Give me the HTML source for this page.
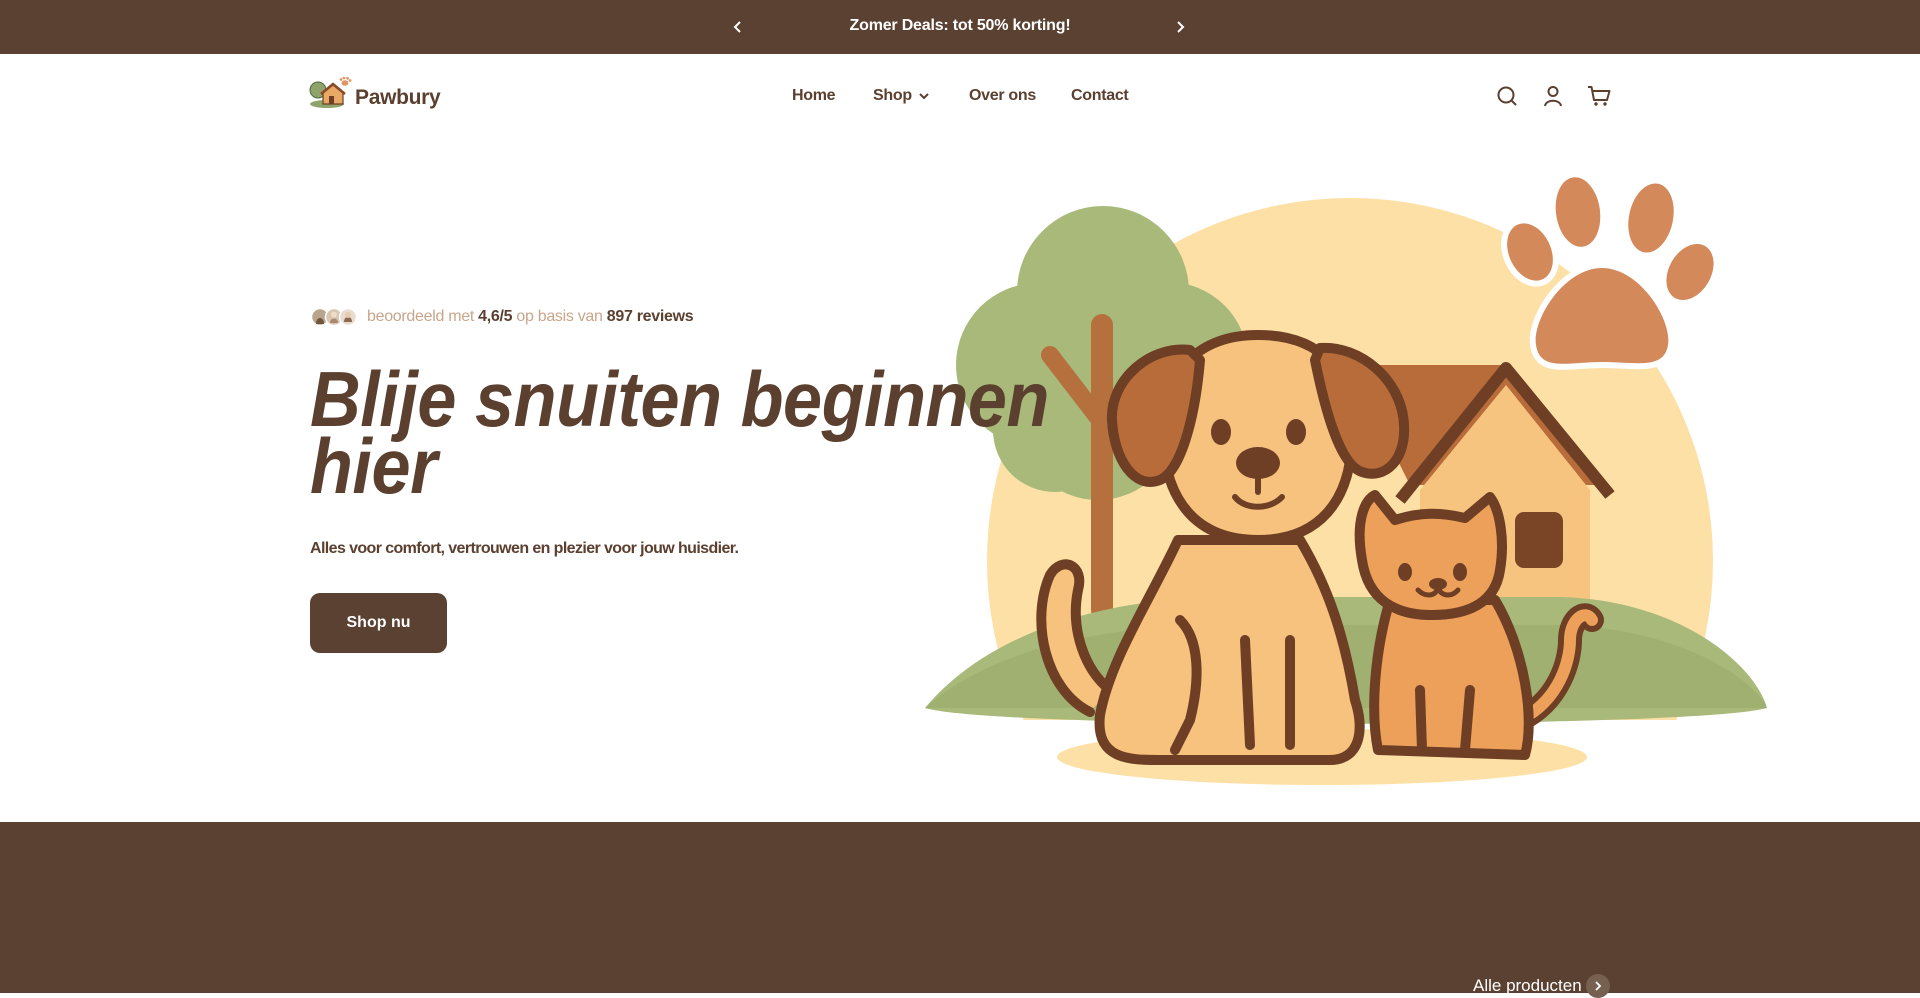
<!DOCTYPE html>
<html><head><meta charset="utf-8"><style>
*{margin:0;padding:0;box-sizing:border-box}
body{width:1920px;height:993px;overflow:hidden;background:#fff;font-family:"Liberation Sans",sans-serif;color:#5b4030;position:relative}
.abs{position:absolute}
.top{left:0;top:0;width:1920px;height:54px;background:#5b4131}
.top .t{left:0;width:1920px;top:17px;text-align:center;color:#fff;font-weight:bold;font-size:16px;letter-spacing:-0.2px}
.nav a{position:absolute;top:87px;font-weight:bold;font-size:16px;color:#5b4030;text-decoration:none;letter-spacing:-0.3px}
h1{position:absolute;z-index:2;left:310px;top:366px;font-size:78px;line-height:67px;font-style:italic;font-weight:bold;white-space:nowrap;transform:scaleX(.9);transform-origin:left top;letter-spacing:-0.5px}
</style></head><body>
<div class="abs top">
  <div class="abs t">Zomer Deals: tot 50% korting!</div>
  <svg class="abs" style="left:732px;top:20px" width="12" height="14" viewBox="0 0 12 14"><path d="M8 2 L3 7 L8 12" stroke="#fff" stroke-width="2" fill="none"/></svg>
  <svg class="abs" style="left:1174px;top:20px" width="12" height="14" viewBox="0 0 12 14"><path d="M4 2 L9 7 L4 12" stroke="#fff" stroke-width="2" fill="none"/></svg>
</div>
<svg class="abs" style="left:309px;top:77px" width="44" height="32" viewBox="0 0 44 32">
  <ellipse cx="18" cy="27" rx="17" ry="4" fill="#8fa46a"/>
  <circle cx="9" cy="13" r="8" fill="#8fa46a" stroke="#4d6b3a" stroke-width="1"/>
  <path d="M14 16 L24 8 L34 16 L34 27 L14 27 Z" fill="#e8a866" stroke="#6e3f25" stroke-width="1.2"/>
  <path d="M12 17 L24 7 L36 17" fill="none" stroke="#8a4a2a" stroke-width="2.5"/>
  <rect x="20" y="19" width="5" height="8" fill="#6e3f25"/>
  <g fill="#e29463"><ellipse cx="36" cy="6" rx="3.4" ry="2.8"/><circle cx="32" cy="2.5" r="1.4"/><circle cx="35" cy="1" r="1.4"/><circle cx="38.5" cy="1.3" r="1.4"/><circle cx="41" cy="3.5" r="1.4"/></g>
</svg>
<div class="abs" style="left:355px;top:86px;font-size:21px;font-weight:bold;color:#5b4030;letter-spacing:-0.3px">Pawbury</div>
<div class="nav">
  <a style="left:792px">Home</a>
  <a style="left:873px">Shop</a>
  <a style="left:969px">Over ons</a>
  <a style="left:1071px">Contact</a>
</div>
<svg class="abs" style="left:918px;top:91px" width="12" height="10" viewBox="0 0 12 10"><path d="M2 3 L6 7 L10 3" stroke="#5b4030" stroke-width="2" fill="none"/></svg>
<svg class="abs" style="left:1496px;top:85px" width="22" height="22" viewBox="0 0 22 22"><circle cx="10" cy="10" r="7.5" stroke="#5b4030" stroke-width="2" fill="none"/><path d="M15.5 15.5 L20 20" stroke="#5b4030" stroke-width="2"/></svg>
<svg class="abs" style="left:1542px;top:85px" width="22" height="22" viewBox="0 0 22 22"><circle cx="11" cy="6.5" r="4.5" stroke="#5b4030" stroke-width="2" fill="none"/><path d="M3 21 C4 14 18 14 19 21" stroke="#5b4030" stroke-width="2" fill="none"/></svg>
<svg class="abs" style="left:1587px;top:85px" width="24" height="22" viewBox="0 0 24 22"><path d="M1 2 L4.5 2 L7 15 L20 15 L22.5 6 L5.5 6" stroke="#5b4030" stroke-width="2" fill="none" stroke-linejoin="round"/><circle cx="9" cy="19" r="1.7" fill="#5b4030"/><circle cx="18" cy="19" r="1.7" fill="#5b4030"/></svg>
<svg class="abs" style="left:311px;top:307px" width="50" height="20" viewBox="0 0 50 20">
  <circle cx="9" cy="10" r="8.5" fill="#b9a58e" stroke="#fff" stroke-width="1.5"/>
  <circle cx="23" cy="10" r="8.5" fill="#d6c6b2" stroke="#fff" stroke-width="1.5"/>
  <circle cx="37" cy="10" r="8.5" fill="#e8dcd0" stroke="#fff" stroke-width="1.5"/>
  <path d="M33 15 C33 8 41 8 41 15" fill="#8a6a55"/><circle cx="37" cy="8" r="3" fill="#e9c9b0"/>
  <path d="M19 16 C19 10 27 10 27 16" fill="#a98a70"/><circle cx="23" cy="7.5" r="3" fill="#f1dcc8"/>
  <path d="M5 17 C5 9 13 9 13 17" fill="#6e5640"/>
</svg>
<div class="abs" style="left:367px;top:308px;font-size:16px;color:#c9a58a;white-space:nowrap;letter-spacing:-0.3px">beoordeeld met <b style="color:#5b4030">4,6/5</b> op basis van <b style="color:#5b4030">897 reviews</b></div>
<h1>Blije snuiten beginnen<br>hier</h1>
<div class="abs" style="left:310px;top:540px;font-size:16px;font-weight:bold;white-space:nowrap;letter-spacing:-0.6px;color:#5b4030">Alles voor comfort, vertrouwen en plezier voor jouw huisdier.</div>
<div class="abs" style="left:310px;top:593px;width:137px;height:60px;background:#5b4131;border-radius:10px;color:#fff;font-weight:bold;font-size:16px;text-align:center;line-height:60px">Shop nu</div>
<svg class="abs" style="left:900px;top:160px" width="900" height="640" viewBox="900 160 900 640">
  <defs><clipPath id="c"><rect x="900" y="160" width="900" height="560"/></clipPath></defs>
  <circle cx="1350" cy="561" r="363" fill="#fde0a6" clip-path="url(#c)"/>
  <g fill="#a8b97a">
    <circle cx="1103" cy="292" r="86"/><circle cx="1038" cy="365" r="82"/><circle cx="1168" cy="362" r="80"/><circle cx="1098" cy="420" r="80"/><circle cx="1055" cy="430" r="62"/>
  </g>
  <path d="M1102 325 L1102 610" stroke="#b5703e" stroke-width="22" stroke-linecap="round"/>
  <path d="M1050 355 L1100 420" stroke="#b5703e" stroke-width="18" stroke-linecap="round"/>
  <path d="M1350 365 L1506 365 L1605 485 L1410 485 Z" fill="#b86c3a"/>
  <path d="M1420 490 L1506 385 L1590 490 L1590 640 L1420 640 Z" fill="#f6c47f"/>
  <path d="M1400 500 L1506 368 L1610 495" fill="none" stroke="#6e3f25" stroke-width="12" stroke-linejoin="round"/>
  <rect x="1515" y="512" width="48" height="56" rx="9" fill="#7a4527"/>
  <path d="M925 708 C 990 630 1110 597 1230 597 L1560 597 C 1680 600 1755 665 1767 708 C 1700 728 1000 730 925 708 Z" fill="#a8b97a"/>
  <path d="M925 708 C 990 650 1100 625 1230 625 L1560 625 C 1680 628 1755 680 1767 708 Z" fill="#98a866" opacity=".5"/>
  <ellipse cx="1322" cy="757" rx="265" ry="28" fill="#fde0a6"/>
  <g fill="#d4895a" stroke="#fff" stroke-width="12" paint-order="stroke">
    <path d="M1602 268 C1640 268 1672 320 1668 345 C1664 370 1636 362 1602 362 C1568 362 1540 372 1536 345 C1532 320 1564 268 1602 268 Z"/>
    <ellipse cx="1530" cy="252" rx="21" ry="30" transform="rotate(-25 1530 252)"/>
    <ellipse cx="1578" cy="212" rx="22" ry="35" transform="rotate(-8 1578 212)"/>
    <ellipse cx="1651" cy="218" rx="22" ry="35" transform="rotate(12 1651 218)"/>
    <ellipse cx="1690" cy="272" rx="21" ry="30" transform="rotate(30 1690 272)"/>
  </g>
  <g stroke="#6e3f25" stroke-width="10" stroke-linecap="round" stroke-linejoin="round">
    <path d="M1090 712 C1045 690 1030 620 1050 575 C1062 555 1085 565 1078 590 C1070 630 1085 670 1110 690" fill="#f6c27e"/>
    <path d="M1178 540 C1150 600 1110 660 1100 715 C1095 760 1130 760 1160 760 L1330 760 C1360 760 1365 730 1355 700 C1345 640 1330 590 1300 540 Z" fill="#f6c27e"/>
    <path d="M1180 620 C1200 640 1200 680 1190 720 L1175 750" fill="none"/>
    <path d="M1245 640 L1250 745" fill="none"/><path d="M1290 640 L1290 745" fill="none"/>
    <path d="M1163 440 C1160 370 1200 335 1258 335 C1320 335 1355 370 1352 440 C1350 500 1320 540 1258 540 C1196 540 1166 500 1163 440 Z" fill="#f6c27e"/>
    <path d="M1190 350 C1150 345 1110 380 1112 420 C1114 460 1135 490 1160 480 C1180 472 1195 420 1200 360 Z" fill="#b86c3a"/>
    <path d="M1320 348 C1360 345 1402 380 1404 425 C1406 460 1385 480 1362 472 C1340 465 1325 410 1315 360 Z" fill="#b86c3a"/>
    <path d="M1235 497 C1245 510 1270 510 1282 497" fill="none" stroke-width="6"/>
    <path d="M1258 470 L1258 492" fill="none" stroke-width="6"/>
  </g>
  <ellipse cx="1221" cy="432" rx="10" ry="13" fill="#6e3f25"/>
  <ellipse cx="1296" cy="432" rx="10" ry="13" fill="#6e3f25"/>
  <ellipse cx="1258" cy="463" rx="22" ry="16" fill="#6e3f25"/>
  <g stroke="#6e3f25" stroke-width="10" stroke-linecap="round" stroke-linejoin="round">
    <path d="M1520 720 C1560 700 1570 660 1570 640 C1570 620 1585 608 1592 620" fill="none" stroke="#6e3f25" stroke-width="24"/>
    <path d="M1520 720 C1560 700 1570 660 1570 640 C1570 620 1585 608 1592 620" fill="none" stroke="#eda05a" stroke-width="12"/>
    <path d="M1390 600 C1375 650 1370 710 1378 750 L1525 755 C1535 720 1525 650 1495 600 Z" fill="#eda05a"/>
    <path d="M1362 560 C1355 520 1365 500 1375 495 L1395 520 C1420 512 1440 512 1465 518 L1490 497 C1500 510 1505 540 1500 570 C1495 605 1465 615 1432 615 C1395 615 1368 600 1362 560 Z" fill="#eda05a"/>
    <path d="M1420 690 L1422 750" fill="none"/><path d="M1470 690 L1465 750" fill="none"/>
    <path d="M1418 590 C1425 597 1435 597 1438 588 C1442 597 1452 597 1458 590" fill="none" stroke-width="5"/>
  </g>
  <ellipse cx="1405" cy="572" rx="7" ry="9" fill="#6e3f25"/>
  <ellipse cx="1460" cy="572" rx="7" ry="9" fill="#6e3f25"/>
  <ellipse cx="1438" cy="584" rx="9" ry="6" fill="#6e3f25"/>
</svg>
<div class="abs" style="left:0;top:822px;width:1920px;height:171px;background:#5b4131"></div>
<div class="abs" style="left:1473px;top:976px;font-size:17px;color:#fff;white-space:nowrap">Alle producten</div>
<div class="abs" style="left:1586px;top:974px;width:24px;height:24px;border-radius:50%;background:#766050"></div>
<svg class="abs" style="left:1593px;top:980px" width="10" height="12" viewBox="0 0 10 12"><path d="M3 2 L7 6 L3 10" stroke="#fff" stroke-width="1.8" fill="none"/></svg>
</body></html>
